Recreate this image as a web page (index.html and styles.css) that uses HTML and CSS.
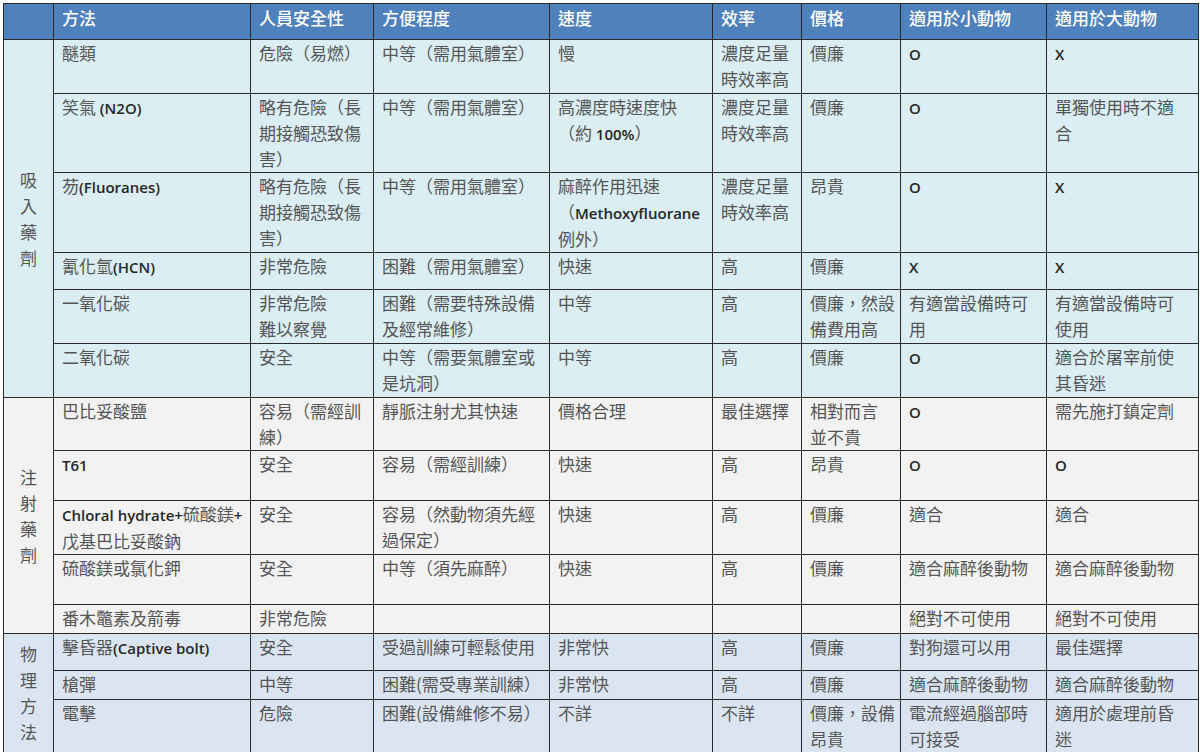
FILE: index.html
```html
<!DOCTYPE html>
<html lang="zh-Hant">
<head>
<meta charset="utf-8">
<title>安樂死方法比較</title>
<link rel="stylesheet" href="styles.css">
</head>
<body>
<table class="grid">
  <colgroup>
    <col class="c0"><col class="c1"><col class="c2"><col class="c3"><col class="c4"><col class="c5"><col class="c6"><col class="c7"><col class="c8">
  </colgroup>
  <thead>
    <tr class="head">
      <th></th><th>方法</th><th>人員安全性</th><th>方便程度</th><th>速度</th><th>效率</th><th>價格</th><th>適用於小動物</th><th>適用於大動物</th>
    </tr>
  </thead>
  <tbody class="inh">
    <tr class="r54">
      <td class="grp" rowspan="6">吸<br>入<br>藥<br>劑</td>
      <td>醚類</td><td>危險（易燃）</td><td>中等（需用氣體室）</td><td>慢</td><td>濃度足量<br>時效率高</td><td>價廉</td><td><span class="lat">O</span></td><td><span class="lat">X</span></td>
    </tr>
    <tr class="r79">
      <td>笑氣 <span class="lat">(N2O)</span></td><td>略有危險（長<br>期接觸恐致傷<br>害）</td><td>中等（需用氣體室）</td><td>高濃度時速度快<br>（約 <span class="lat">100%</span>）</td><td>濃度足量<br>時效率高</td><td>價廉</td><td><span class="lat">O</span></td><td>單獨使用時不適<br>合</td>
    </tr>
    <tr class="r79">
      <td>芴<span class="lat">(Fluoranes)</span></td><td>略有危險（長<br>期接觸恐致傷<br>害）</td><td>中等（需用氣體室）</td><td>麻醉作用迅速<br>（<span class="lat">Methoxyfluorane</span><br>例外）</td><td>濃度足量<br>時效率高</td><td>昂貴</td><td><span class="lat">O</span></td><td><span class="lat">X</span></td>
    </tr>
    <tr class="r37">
      <td>氰化氫<span class="lat">(HCN)</span></td><td>非常危險</td><td>困難（需用氣體室）</td><td>快速</td><td>高</td><td>價廉</td><td><span class="lat">X</span></td><td><span class="lat">X</span></td>
    </tr>
    <tr class="r54">
      <td>一氧化碳</td><td>非常危險<br>難以察覺</td><td>困難（需要特殊設備<br>及經常維修）</td><td>中等</td><td>高</td><td>價廉，然設<br>備費用高</td><td>有適當設備時可<br>用</td><td>有適當設備時可<br>使用</td>
    </tr>
    <tr class="r54">
      <td>二氧化碳</td><td>安全</td><td>中等（需要氣體室或<br>是坑洞）</td><td>中等</td><td>高</td><td>價廉</td><td><span class="lat">O</span></td><td>適合於屠宰前使<br>其昏迷</td>
    </tr>
  </tbody>
  <tbody class="inj">
    <tr class="r53">
      <td class="grp" rowspan="5">注<br>射<br>藥<br>劑</td>
      <td>巴比妥酸鹽</td><td>容易（需經訓<br>練）</td><td>靜脈注射尤其快速</td><td>價格合理</td><td>最佳選擇</td><td>相對而言<br>並不貴</td><td><span class="lat">O</span></td><td>需先施打鎮定劑</td>
    </tr>
    <tr class="r50">
      <td><span class="lat">T61</span></td><td>安全</td><td>容易（需經訓練）</td><td>快速</td><td>高</td><td>昂貴</td><td><span class="lat">O</span></td><td><span class="lat">O</span></td>
    </tr>
    <tr class="r54">
      <td><span class="lat">Chloral hydrate+</span>硫酸鎂<span class="lat">+</span><br>戊基巴比妥酸鈉</td><td>安全</td><td>容易（然動物須先經<br>過保定）</td><td>快速</td><td>高</td><td>價廉</td><td>適合</td><td>適合</td>
    </tr>
    <tr class="r50">
      <td>硫酸鎂或氯化鉀</td><td>安全</td><td>中等（須先麻醉）</td><td>快速</td><td>高</td><td>價廉</td><td>適合麻醉後動物</td><td>適合麻醉後動物</td>
    </tr>
    <tr class="r29">
      <td>番木鼈素及箭毒</td><td>非常危險</td><td></td><td></td><td></td><td></td><td>絕對不可使用</td><td>絕對不可使用</td>
    </tr>
  </tbody>
  <tbody class="phy">
    <tr class="r37">
      <td class="grp" rowspan="3">物<br>理<br>方<br>法</td>
      <td>擊昏器<span class="lat">(Captive bolt)</span></td><td>安全</td><td>受過訓練可輕鬆使用</td><td>非常快</td><td>高</td><td>價廉</td><td>對狗還可以用</td><td>最佳選擇</td>
    </tr>
    <tr class="r29">
      <td>槍彈</td><td>中等</td><td>困難(需受專業訓練）</td><td>非常快</td><td>高</td><td>價廉</td><td>適合麻醉後動物</td><td>適合麻醉後動物</td>
    </tr>
    <tr class="r53">
      <td>電擊</td><td>危險</td><td>困難(設備維修不易）</td><td>不詳</td><td>不詳</td><td>價廉，設備<br>昂貴</td><td>電流經過腦部時<br>可接受</td><td>適用於處理前昏<br>迷</td>
    </tr>
  </tbody>
</table>
</body>
</html>
```

FILE: styles.css
```css
html, body {
  margin: 0;
  padding: 0;
  background: #ffffff;
}

body {
  font-family: "Noto Sans CJK TC", "Noto Sans CJK SC", sans-serif;
  font-size: 17px;
  color: #555555;
}

.grid {
  margin: 3px 0 0 3px;
  border-collapse: collapse;
  table-layout: fixed;
  width: 1195px;
}

.c0 { width: 50px; }
.c1 { width: 197px; }
.c2 { width: 123px; }
.c3 { width: 176px; }
.c4 { width: 163px; }
.c5 { width: 89px; }
.c6 { width: 99px; }
.c7 { width: 146px; }
.c8 { width: 152px; }

.grid th,
.grid td {
  border: 1px solid #2a2a2a;
  padding: 0 2px 0 8px;
  line-height: 26px;
  vertical-align: top;
  text-align: left;
  white-space: nowrap;
  overflow: hidden;
}

.head {
  height: 36px;
}

.head th {
  background: #4f81bd;
  color: #ffffff;
  font-weight: 500;
  padding-top: 1px;
}

.inh td { background: #daeef3; }
.inj td { background: #f2f2f2; }
.phy td { background: #dbe5f1; }

.grid td.grp {
  vertical-align: middle;
  text-align: center;
  padding: 0;
  line-height: 26px;
}

.lat {
  font-family: "Open Sans", "Noto Sans", sans-serif;
  font-size: 15px;
  font-weight: 600;
  color: #262626;
}

.r29 { height: 29px; }
.r37 { height: 37px; }
.r50 { height: 50px; }
.r53 { height: 53px; }
.r54 { height: 54px; }
.r79 { height: 79px; }
```
